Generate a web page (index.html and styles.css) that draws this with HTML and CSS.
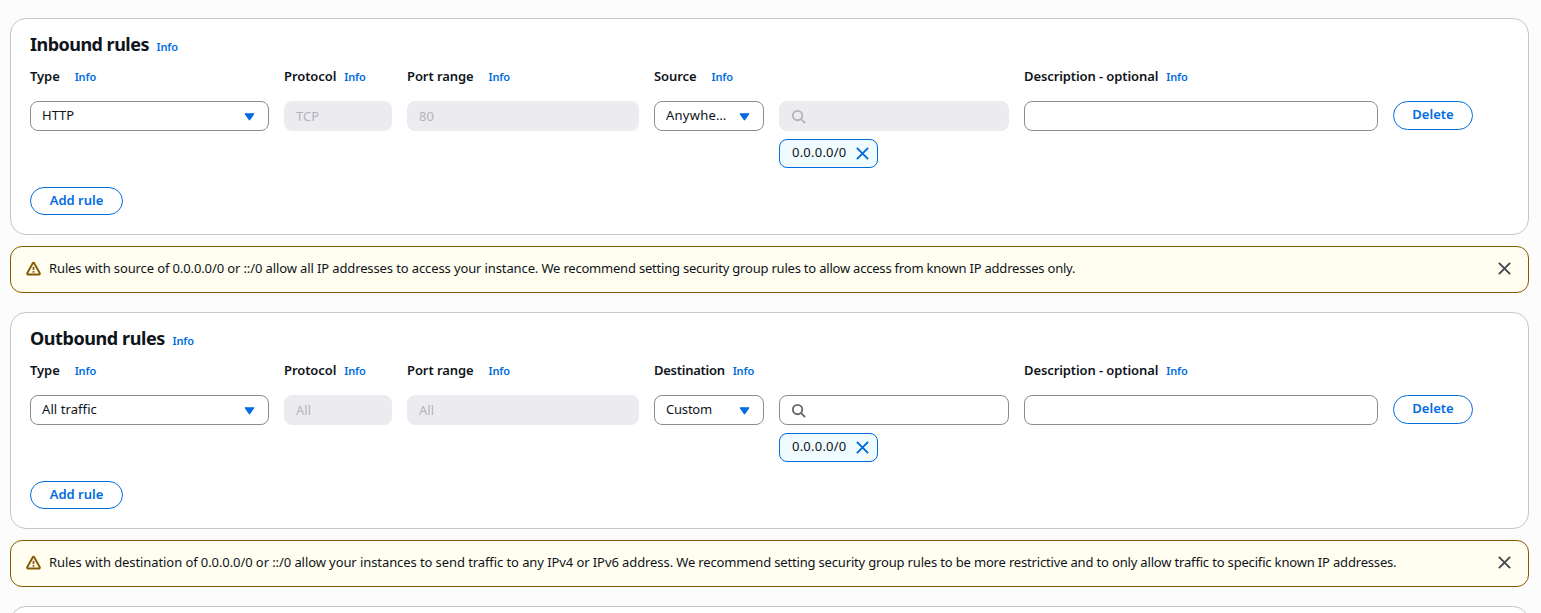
FILE: index.html
```html
<!DOCTYPE html>
<html lang="en">
<head>
<meta charset="utf-8">
<title>Security group rules</title>
<link rel="stylesheet" href="styles.css">
</head>
<body>
<svg class="defs" aria-hidden="true">
  <symbol id="close" viewBox="0 0 16 16"><path d="m2 2 12 12M14 2 2 14" fill="none" stroke="currentColor" stroke-width="2"/></symbol>
  <symbol id="search" viewBox="0 0 16 16"><circle cx="7" cy="7" r="5" fill="none" stroke="currentColor" stroke-width="2"/><path d="m10.5 10.5 4.5 4.5" fill="none" stroke="currentColor" stroke-width="2"/></symbol>
  <symbol id="warning" viewBox="0 0 16 16"><path d="M7.2 2.4 1.3 13c-.3.6.1 1.4.8 1.4h11.8c.7 0 1.1-.8.8-1.4L8.8 2.4c-.4-.7-1.2-.7-1.6 0Z" fill="none" stroke="currentColor" stroke-width="2" stroke-linejoin="round"/><path d="M8 6v3.6M8 10.6v1.8" fill="none" stroke="currentColor" stroke-width="1.8"/></symbol>
  <symbol id="caret" viewBox="0 0 11 8"><path d="M1 .8h9L5.5 7.2Z" fill="currentColor" stroke="currentColor" stroke-linejoin="round"/></symbol>
</svg>
<main class="page">
  <section class="card">
    <h2 class="title"><span class="t-in">Inbound rules</span><a class="info">Info</a></h2>
    <div class="grid labels">
      <div class="label wide">Type<a class="info">Info</a></div>
      <div class="label">Protocol<a class="info">Info</a></div>
      <div class="label wide">Port range<a class="info">Info</a></div>
      <div class="label wide">Source<a class="info">Info</a></div>
      <div></div>
      <div class="label desc">Description - optional<a class="info">Info</a></div>
    </div>
    <div class="grid">
      <div class="field"><span>HTTP</span><svg class="caret"><use href="#caret"/></svg></div>
      <div class="field off"><span>TCP</span></div>
      <div class="field off"><span>80</span></div>
      <div class="field"><span class="anywhere">Anywhe…</span><svg class="caret"><use href="#caret"/></svg></div>
      <div class="stack">
        <div class="field off"><svg class="search"><use href="#search"/></svg></div>
        <div class="token"><span>0.0.0.0/0</span><svg class="x"><use href="#close"/></svg></div>
      </div>
      <div class="field"></div>
      <button class="btn delete">Delete</button>
    </div>
    <button class="btn add">Add rule</button>
  </section>
  <div class="alert">
    <svg class="warn"><use href="#warning"/></svg>
    <span class="msg first">Rules with source of 0.0.0.0/0 or ::/0 allow all IP addresses to access your instance. <span class="advice">We recommend setting security group rules to allow access from known IP addresses only.</span></span>
    <svg class="x dismiss"><use href="#close"/></svg>
  </div>
  <section class="card">
    <h2 class="title"><span class="t-out">Outbound rules</span><a class="info">Info</a></h2>
    <div class="grid labels">
      <div class="label wide">Type<a class="info">Info</a></div>
      <div class="label">Protocol<a class="info">Info</a></div>
      <div class="label wide">Port range<a class="info">Info</a></div>
      <div class="label dest">Destination<a class="info">Info</a></div>
      <div></div>
      <div class="label desc">Description - optional<a class="info">Info</a></div>
    </div>
    <div class="grid">
      <div class="field"><span class="traffic">All traffic</span><svg class="caret"><use href="#caret"/></svg></div>
      <div class="field off"><span>All</span></div>
      <div class="field off"><span>All</span></div>
      <div class="field"><span class="custom">Custom</span><svg class="caret"><use href="#caret"/></svg></div>
      <div class="stack">
        <div class="field"><svg class="search"><use href="#search"/></svg></div>
        <div class="token"><span>0.0.0.0/0</span><svg class="x"><use href="#close"/></svg></div>
      </div>
      <div class="field"></div>
      <button class="btn delete">Delete</button>
    </div>
    <button class="btn add">Add rule</button>
  </section>
  <div class="alert">
    <svg class="warn"><use href="#warning"/></svg>
    <span class="msg second">Rules with destination of 0.0.0.0/0 or ::/0 allow your instances to send traffic to any IPv4 or IPv6 address. <span class="advice">We recommend setting security group rules to be more restrictive and to only allow traffic to specific known IP addresses.</span></span>
    <svg class="x dismiss"><use href="#close"/></svg>
  </div>
  <section class="card"></section>
</main>
</body>
</html>
```
FILE: styles.css
```css
* { box-sizing: border-box; }
html, body { height: 100%; }
body { margin: 0; background: #fcfcfd; color: #0f141a; font: 13px/20px "Noto Sans", sans-serif; overflow: hidden; }
.defs { position: absolute; width: 0; height: 0; }
svg { flex: none; }
.page { height: 613px; overflow: hidden; padding: 18px 12px 0 10px; }
.card { height: 217px; background: #fff; border: 1px solid #c6c6cd; border-radius: 16px; padding: 14px 19px 0; }
.title { display: flex; align-items: baseline; gap: 8px; margin: 0; height: 23px; font-size: 18px; line-height: 22px; font-weight: 700; white-space: nowrap; }
.t-in { width: 118.5px; letter-spacing: -.52px; }
.t-out { width: 134.5px; letter-spacing: -.42px; }
.info { color: #006ce0; font-size: 11px; line-height: 16px; font-weight: 600; letter-spacing: -.15px; }
.grid { display: grid; grid-template-columns: 239px 108px 232px 110px 230px 354px 80px; column-gap: 15px; align-items: start; }
.labels { height: 45px; padding-top: 10px; }
.label { display: flex; align-items: baseline; gap: 8px; font-weight: 600; letter-spacing: -.08px; white-space: nowrap; }
.label.wide { gap: 15px; }
.label.dest { letter-spacing: -.27px; }
.label.desc { letter-spacing: -.1px; }
.field { display: flex; align-items: center; justify-content: space-between; height: 30px; padding: 0 13px 1px 11px; border: 1px solid #8c8c94; border-radius: 8px; background: #fff; white-space: nowrap; }
.field span { padding-bottom: 1px; }
.field.off { background: #ebebf0; border-color: #ebebf0; color: #b4b4bb; padding-bottom: 0; }
.field.off span { padding: 0; }
.anywhere { letter-spacing: .25px; }
.custom { letter-spacing: -.2px; }
.traffic { letter-spacing: .08px; }
.caret { width: 11px; height: 8px; color: #006ce0; margin-top: 3px; }
.search { width: 15px; height: 15px; color: #656871; margin-top: 2px; }
.off .search { color: #b4b4bb; margin-top: 1px; }
.stack { display: grid; gap: 8px; }
.token { display: flex; align-items: center; justify-content: space-between; width: 99px; height: 29px; padding: 0 7px 0 12px; border: 1px solid #006ce0; border-radius: 8px; background: #f0fbff; letter-spacing: .22px; }
.token span { line-height: 20px; padding-bottom: 3px; }
.x { width: 15px; height: 15px; color: #006ce0; }
.btn { display: block; margin: 0; padding: 0 0 2px; background: #fff; color: #006ce0; border: 1px solid #006ce0; border-radius: 15px; font: 600 13px/20px "Noto Sans", sans-serif; }
.delete { width: 80px; height: 29px; padding-bottom: 3px; }
.add { width: 93px; height: 28px; margin-top: 19px; }
.alert { display: flex; align-items: center; height: 47px; margin: 11px 0 19px; padding: 0 16px 2px 15px; border: 1px solid #855900; border-radius: 12px; background: #fffef0; white-space: nowrap; }
.msg { padding-bottom: 1px; }
.first { letter-spacing: -.117px; }
.first .advice { letter-spacing: -.21px; }
.second { letter-spacing: -.085px; }
.second .advice { letter-spacing: -.172px; }
.warn { width: 15px; height: 15px; margin: 0 8px 0 0; color: #855900; }
.alert .dismiss { margin-left: auto; color: #424650; }
```
